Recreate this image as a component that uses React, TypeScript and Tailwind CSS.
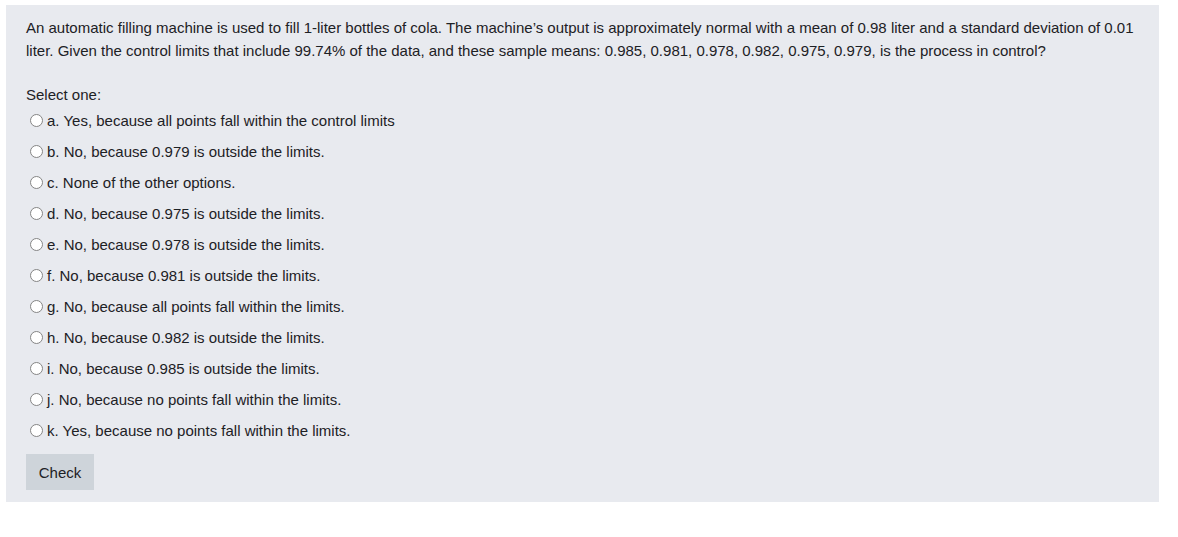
import React from 'react';

// Quiz question card: prompt, radio options, and the check button

const options = [
  'a. Yes, because all points fall within the control limits',
  'b. No, because 0.979 is outside the limits.',
  'c. None of the other options.',
  'd. No, because 0.975 is outside the limits.',
  'e. No, because 0.978 is outside the limits.',
  'f. No, because 0.981 is outside the limits.',
  'g. No, because all points fall within the limits.',
  'h. No, because 0.982 is outside the limits.',
  'i. No, because 0.985 is outside the limits.',
  'j. No, because no points fall within the limits.',
  'k. Yes, because no points fall within the limits.',
];

const RadioOption: React.FC<{ label: string }> = ({ label }) => (
  <label className="flex h-[31px] items-center">
    <span className="ml-[4px] mr-[4px] inline-block h-[13px] w-[13px] shrink-0 rounded-full border border-[#858585] bg-white" />
    <span>{label}</span>
  </label>
);

export default function App() {
  return (
    <div className="min-h-[537px] bg-white pl-[6px] pt-[5px]" style={{ fontFamily: '"Liberation Sans", Arial, sans-serif' }}>
      <div className="w-[1153px] bg-[#e8eaef] px-[20px] pt-[11px] pb-[12px] text-[15px] leading-[23px] text-[#1d2125]">
        <p>
          An automatic filling machine is used to fill 1-liter bottles of cola. The machine’s output is approximately normal with a mean of 0.98 liter and a standard deviation of 0.01 liter. Given the control limits that include 99.74% of the data, and these sample means: 0.985, 0.981, 0.978, 0.982, 0.975, 0.979, is the process in control?
        </p>

        <div className="mt-[21px]">Select one:</div>

        <div className="-mt-[1px] flex flex-col">
          {options.map((opt) => (
            <RadioOption key={opt} label={opt} />
          ))}
        </div>

        <button
          type="button"
          className="mt-[8px] h-[36px] w-[68px] bg-[#ced4da] text-[15px] text-[#1d2125]"
        >
          Check
        </button>
      </div>
    </div>
  );
}
